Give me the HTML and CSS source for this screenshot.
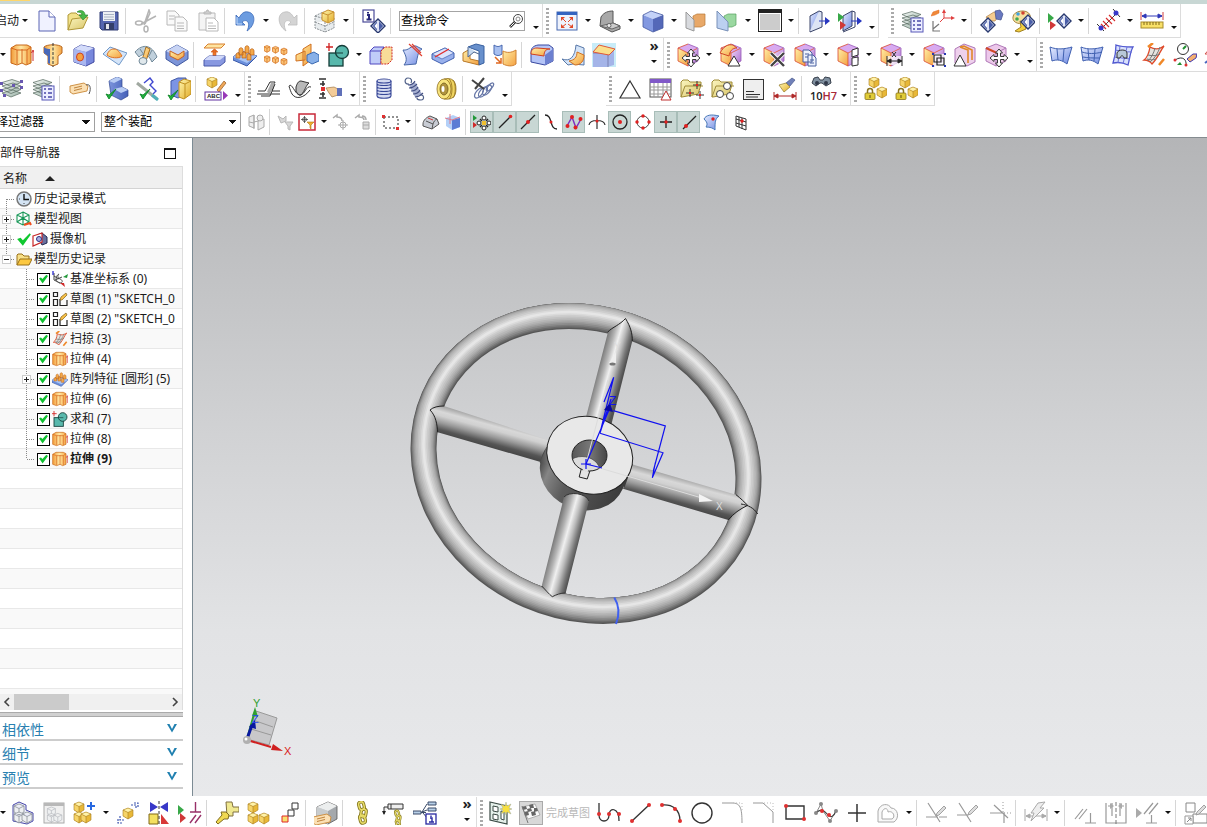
FILE: index.html
```html
<!DOCTYPE html>
<html lang="zh-CN">
<head>
<meta charset="utf-8">
<title>部件导航器</title>
<link rel="stylesheet" href="styles.css">
</head>
<body>
<svg class="defs" aria-hidden="true">
<defs>
<linearGradient id="gO" x1="0" y1="0" x2="1" y2="1"><stop offset="0" stop-color="#fff0a8"/><stop offset="1" stop-color="#f4a040"/></linearGradient>
<linearGradient id="gOh"><stop offset="0" stop-color="#f29a38"/><stop offset=".5" stop-color="#ffe8a4"/><stop offset="1" stop-color="#f4a444"/></linearGradient>
<linearGradient id="gB" x1="0" y1="0" x2="1" y2="1"><stop offset="0" stop-color="#e6ecff"/><stop offset="1" stop-color="#6f8ae2"/></linearGradient>
<linearGradient id="gD"><stop offset="0" stop-color="#7c94dc"/><stop offset="1" stop-color="#4460b8"/></linearGradient>
<linearGradient id="gY" x1="0" y1="0" x2="1" y2="1"><stop offset="0" stop-color="#fff6b0"/><stop offset="1" stop-color="#e2ac28"/></linearGradient>
<linearGradient id="gF" x1="0" y1="0" x2="1" y2="1"><stop offset="0" stop-color="#fbf6c0"/><stop offset="1" stop-color="#d8c468"/></linearGradient>
<linearGradient id="gP" x1="0" y1="0" x2="1" y2="1"><stop offset="0" stop-color="#efd9f8"/><stop offset="1" stop-color="#a868cc"/></linearGradient>
<linearGradient id="gG" x1="0" y1="0" x2="1" y2="1"><stop offset="0" stop-color="#f6f6f6"/><stop offset="1" stop-color="#8c8c8c"/></linearGradient>
<linearGradient id="gL" x1="0" y1="0" x2="1" y2="1"><stop offset="0" stop-color="#f2f6f4"/><stop offset="1" stop-color="#9cb4a8"/></linearGradient>
<g id="yc"><path d="M5 0l5 2v6l-5 3-5-3V2z" fill="#e8b838"/><path d="M5 0l5 2-5 2.500L0 2z" fill="#fff2a8"/><path d="M0 2l5 2.500V11L0 8z" fill="#f6d468"/><path d="M5 0l5 2v6l-5 3-5-3V2zM0 2l5 2.500L10 2M5 4.500V11" fill="none" stroke="#a87c20" stroke-width=".6"/></g>
<g id="oc"><path d="M3.500 0L7 1.500V6L3.500 8 0 6V1.500z" fill="#fbc478" stroke="#d06818" stroke-width=".8"/><path d="M0 1.500l3.500 1.700L7 1.500M3.500 3.200V8" fill="none" stroke="#d06818" stroke-width=".7"/></g>
<g id="gc"><path d="M5 0l5 2v6l-5 3-5-3V2zM0 2l5 2.500L10 2M5 4.500V11" fill="#eef0f2" stroke="#8a9098" stroke-width=".8"/></g>
<g id="pcube"><path d="M12 1l10 4-10 5L2 5z" fill="#d8aaf0"/><path d="M2 5l10 5v13L2 18z" fill="url(#gO)"/><path d="M22 5v13l-10 5V10z" fill="url(#gP)"/><path d="M12 1l10 4v13l-10 5" fill="none" stroke="#9858b8" stroke-width=".8"/><path d="M12 10v13L2 18V5l10 5 9-4.500M2 5l10-4" fill="none" stroke="#d84830" stroke-width=".8"/></g>
<g id="eye"><path d="M8 0l7 7-7 7-7-7z" fill="#dfe4f6" stroke="#28386e" stroke-width="1.400"/><path d="M7 2.500v9L2.800 7zM9 2.500v9L13.200 7z" fill="#4a5ea8"/><path d="M7 4v6L4.500 7z" fill="#fff"/></g>
<g id="lay"><path d="M2 16l9 4 10-4-8-3zM2 12.500l9 4 10-4-8-3zM2 9l9 4 10-4-8-3zM2 5.500l9 4 10-4-9-3z" fill="url(#gL)" stroke="#56685e" stroke-width=".7"/></g>
<g id="list"><rect x="11" y="9" width="12" height="14" fill="#eceeff" stroke="#5858b8"/><path d="M13 12h2M13 16h2M13 20h2M17 12h4M17 16h4M17 20h4" stroke="#4848a8" stroke-width="1.300"/></g>
<g id="tick"><path d="M1 6l3 5 7-10-7 6z" fill="#20b040" stroke="#088020" stroke-width=".8"/></g>
<g id="move"><path d="M7 0l3.500 4H8.500v3.500H12V5.500L16 9l-4 3.500v-2H8.500V14h2L7 18l-3.500-4h2v-3.500H2v2L-2 9l4-3.500v2h3.500V4h-2z" fill="#fff" stroke="#3a3a3a" stroke-width="1"/></g>
<g id="star"><path d="M6 0l1 4 4-2-2 4 3 1-3 1 2 4-4-2-1 3-1-3-4 2 2-4-3-1 3-1-2-4 4 2z" fill="#f8e040" stroke="#8898a0" stroke-width=".4"/></g>
<g id="tag"><path d="M1 6l14-3 4 3-1 5-14 3-3-2z" fill="#fbe0b4" stroke="#c88838" stroke-width=".9"/><path d="M5 8l8-2M5 10.500l8-2" stroke="#b87830" stroke-width=".9"/></g>
<g id="chain" fill="none" stroke="#857820" stroke-width="3.200"><rect x="2" y="1" width="5" height="8" rx="2.500" transform="rotate(-15 4 5)"/><rect x="4" y="8" width="5" height="8" rx="2.500" transform="rotate(10 6 12)"/><rect x="3" y="14" width="5" height="8" rx="2.500" transform="rotate(-15 6 18)"/><g stroke="#e8dc68" stroke-width="1.500"><rect x="2" y="1" width="5" height="8" rx="2.500" transform="rotate(-15 4 5)"/><rect x="4" y="8" width="5" height="8" rx="2.500" transform="rotate(10 6 12)"/><rect x="3" y="14" width="5" height="8" rx="2.500" transform="rotate(-15 6 18)"/></g></g>
<g id="pencil"><path d="M0 10l1-3L8 0l2 2-7 7z" fill="#ddd" stroke="#999" stroke-width=".9"/></g>
<g id="lock"><path d="M2.500 5V3a2.500 2.500 0 0 1 5 0v2" fill="none" stroke="#8a7420" stroke-width="1.500"/><rect x="0" y="5" width="10" height="6.500" rx="1" fill="#e0cc38" stroke="#8a7420" stroke-width=".8"/><path d="M5 7v3" stroke="#655010"/></g>
</defs>
<!-- standard bar -->
<symbol id="new" viewBox="0 0 24 24"><path d="M4 2h10l6 6v14H4z" fill="#f0f2ff" stroke="#5a64b4"/><path d="M14 2v6h6" fill="#fff" stroke="#5a64b4"/></symbol>
<symbol id="open" viewBox="0 0 24 24"><path d="M2 21V6l3-2h5l2 2h7v4" fill="#f2e28a" stroke="#b09838"/><path d="M2 21L6 10l16-2-5 11z" fill="url(#gF)" stroke="#b09838"/><path d="M11 3c4-3 8-1 8 3h3l-5 5-4-5h3c0-2-2-3-5-3z" fill="#48b848" stroke="#208028" stroke-width=".6"/></symbol>
<symbol id="save" viewBox="0 0 24 24"><path d="M3 3h18v18H5l-2-2z" fill="#5566b0" stroke="#303c74"/><rect x="6" y="3" width="12" height="9" fill="#edf0f4"/><path d="M7 5.500h10M7 8h10M7 10.500h10" stroke="#aab4c4"/><rect x="7" y="14" width="10" height="7" fill="#333e68"/><rect x="9" y="15" width="3" height="5" fill="#e4e6ec"/></symbol>
<symbol id="cut" viewBox="0 0 24 24" ><g fill="none" stroke="#b4b4b4" stroke-width="1.500"><path d="M7 15L22 7M10 16L15 1l1 3-5 11"/><ellipse cx="5" cy="14" rx="3.500" ry="2"/><ellipse cx="12" cy="20" rx="2" ry="3"/></g></symbol>
<symbol id="copy" viewBox="0 0 24 24"><g fill="#fafafa" stroke="#b8b8b8"><path d="M2 2h8l4 4v10H2z"/><path d="M10 8h8l4 4v10H10z"/><path d="M4 7h6M4 10h5M12 14h7M12 17h7M12 19.500h7"/></g></symbol>
<symbol id="paste" viewBox="0 0 24 24"><g fill="#f4f4f4" stroke="#b8b8b8"><path d="M3 4h16v17H3z"/><path d="M8 5V3h2l1-2h1l1 2h2v2z" fill="#ccc"/><path d="M10 9h8l4 4v9H10z" fill="#fff"/><path d="M12 14h5M12 17h8M12 19.500h8"/></g></symbol>
<symbol id="undo" viewBox="0 0 24 24"><path d="M3 6v10h9l-3-3c5-4 9 1 5 9 9-6 9-18 1-19-4-1-7 2-9 6z" fill="#6c9ce0" stroke="#3a68b8" stroke-width=".8"/><path d="M4 8v7h5" fill="none" stroke="#c4dcfc"/></symbol>
<symbol id="redo" viewBox="0 0 24 24"><path d="M21 6v10h-9l3-3c-5-4-9 1-5 9C1 16 1 4 9 3c4-1 7 2 9 6z" fill="#d4d4d4" stroke="#bcbcbc" stroke-width=".8"/></symbol>
<symbol id="box" viewBox="0 0 24 24"><path d="M2 7l8-4 11 6v10l-9 4-10-4zM2 13l10 4 9-4M12 10v13M2 7l10 3" fill="#e8ecee" stroke="#8a9094" stroke-dasharray="2 1"/><path d="M9 4l6-3 6 2v8l-6 3-6-3z" fill="url(#gY)" stroke="#c89030"/><path d="M9 4l6 2 6-3M15 6v8" fill="none" stroke="#c89030"/></symbol>
<symbol id="info" viewBox="0 0 24 24"><rect x="1" y="1" width="11" height="12" fill="#fff" stroke="#4a4a98" stroke-width="1.200"/><path d="M5 6h2v4M4.500 10.500h5M6 3v1.500" stroke="#28287a" stroke-width="2" fill="none"/><use href="#eye" x="8" y="10"/></symbol>
<symbol id="mag" viewBox="0 0 16 16"><circle cx="10" cy="6" r="4.500" fill="#fff" stroke="#444"/><circle cx="10" cy="6" r="2" fill="none" stroke="#888"/><path d="M7 9l-5 5" stroke="#333" stroke-width="2.600"/><path d="M6.500 9.500l-4 4" stroke="#fff"/></symbol>
<symbol id="fit" viewBox="0 0 24 24"><rect x="2" y="3" width="20" height="18" fill="#eef2fc" stroke="#4668b0"/><path d="M2 3h20v3H2z" fill="#3464c0"/><g fill="#e04828"><path d="M6 8h4l-4 4zM18 8h-4l4 4zM6 19h4l-4-4zM18 19h-4l4-4z"/><path d="M7 9l4 4M17 9l-4 4M7 18l4-3M17 18l-4-3" stroke="#e04828"/></g></symbol>
<symbol id="persp" viewBox="0 0 24 24"><path d="M2 17l1-9c3-5 8-6 12-6v12l7 3v3l-8 3z" fill="#a8a8a8" stroke="#555"/><path d="M2 17l13-3 7 3-8 3z" fill="#ccc" stroke="#666"/><circle cx="11" cy="16.500" r="2" fill="#eee" stroke="#666"/></symbol>
<symbol id="bcube" viewBox="0 0 24 24"><path d="M10 2l12 4-10 4L2 6z" fill="#c4d2f8"/><path d="M2 6l10 4v13L2 18z" fill="#8298e0"/><path d="M22 6v13l-10 4V10z" fill="#5468b8"/><path d="M10 2l12 4v13l-10 4-10-5V6z" fill="none" stroke="#4458a0" stroke-width=".8"/></symbol>
<symbol id="clip1" viewBox="0 0 24 24"><path d="M9 7l4-2h8v11l-4 2H9z" fill="#e8a868" stroke="#b87838" stroke-width=".7"/><path d="M2 3l8 8v11l-8-3z" fill="#d8dade" stroke="#999"/></symbol>
<symbol id="clip2" viewBox="0 0 24 24"><path d="M9 7l4-2h8v11l-4 2H9z" fill="#9ad8a0" stroke="#58a060" stroke-width=".7"/><path d="M2 2l11 11v9L2 19z" fill="#bcd0f0" stroke="#7890b8"/></symbol>
<symbol id="bg" viewBox="0 0 24 24"><rect x=".500" y=".500" width="23" height="22" fill="#ccc" stroke="#222"/><path d="M0 1h24v3H0z" fill="#222"/><rect x="1.500" y="4.500" width="21" height="17" fill="none" stroke="#fff"/></symbol>
<symbol id="door1" viewBox="0 0 24 24"><path d="M3 7l9-5v15l-9 5z" fill="url(#gB)" stroke="#3a4468"/><path d="M12 2l3 1v15l-12 5v-1" fill="#dde4f4" stroke="#3a4468"/><path d="M12 11.500h6V8l5 4-5 4v-3.500h-6z" fill="#2838c0"/></symbol>
<symbol id="door2" viewBox="0 0 24 24"><path d="M5 7l9-5v15l-9 5z" fill="url(#gB)" stroke="#3a4468"/><path d="M14 2l3 1v15L5 23" fill="none" stroke="#3a4468"/><path d="M13 11.500h6V8l5 4-5 4v-3.500h-6z" fill="#2838c0"/><path d="M0 4l6 4-6 5z" fill="#38a848"/><path d="M2 12l6 4-6 5z" fill="#d03838"/></symbol>
<symbol id="layset" viewBox="0 0 24 24"><use href="#lay"/><use href="#list"/></symbol>
<symbol id="laydots" viewBox="0 0 24 24"><use href="#lay"/><path d="M0 5h3v3H0zM20 3h3v3h-3zM0 12h3v3H0zM20 9h3v3h-3zM12 7h3v3h-3zM3 17h3v3H3z" fill="#6858b0"/></symbol>
<symbol id="wcs" viewBox="0 0 24 24"><path d="M13 3v6h8M13 9l-4 4" fill="none" stroke="#e04040"/><path d="M13 0l-2 4h4zM24 9l-4-2v4z" fill="#e04040"/><path d="M2 12v10h7M2 20l6-5" fill="none" stroke="#777" stroke-width="1.200"/><path d="M0 7l2-4 6-2v3L4 6z" fill="#f08838" stroke="#e06820" stroke-width=".5"/></symbol>
<symbol id="hand" viewBox="0 0 24 24"><path d="M6 8l8-5 5 3-4 6H9z" fill="#f4cc90" stroke="#b08040" stroke-width=".7"/><path d="M15 2l5-1 3 4-2 6-5-1z" fill="#6878c0" stroke="#40508c" stroke-width=".7"/><use href="#eye" x="0" y="9"/></symbol>
<symbol id="pal" viewBox="0 0 24 24"><path d="M2 8C2 2 16-1 19 6c2 6-5 4-6 7S1 15 2 8z" fill="#f4e0a0" stroke="#a88840"/><circle cx="7" cy="5" r="1.800" fill="#40a0e0"/><circle cx="12" cy="4" r="1.800" fill="#d04030"/><circle cx="6" cy="10" r="1.800" fill="#40a850"/><path d="M4 22l6-4-1-6 5 1 1 7-7 3z" fill="#f4d040" stroke="#a08020"/><use href="#eye" x="9" y="6"/></symbol>
<symbol id="show" viewBox="0 0 24 24"><path d="M0 4l6 5-6 5z" fill="#38a848"/><path d="M2 12l6 4-6 5z" fill="#d03838"/><use href="#eye" x="8" y="5"/></symbol>
<symbol id="meas" viewBox="0 0 24 24"><path d="M3 21L21 3" stroke="#444"/><path d="M6 12l6 6M9 9l6 6M12 6l6 6M4 15l5 5" stroke="#d83030" stroke-width="1.200"/><path d="M0 15l7 7M16 0l7 8" stroke="#333"/><circle cx="4" cy="19" r="2.500" fill="#3838c8"/><circle cx="19" cy="4" r="2.500" fill="#3838c8"/></symbol>
<symbol id="ruler" viewBox="0 0 24 24"><path d="M1 3v8M23 3v8" stroke="#d04040"/><path d="M2 7h20M2 7l4-2v4zM22 7l-4-2v4z" fill="#3038b8" stroke="#3038b8"/><rect x="1" y="13" width="22" height="6" fill="#f8e068" stroke="#a88c28"/><path d="M4 13v3M7 13v3M10 13v3M13 13v3M16 13v3M19 13v3" stroke="#806818"/></symbol>
<!-- feature bar -->
<symbol id="extr" viewBox="0 0 24 24"><path d="M1 5l5-3h11l4 2v16l-5 2-4-2-5 2-6-2z" fill="url(#gOh)" stroke="#c86818"/><path d="M1 5l6 2h10l4-3M7 7v14M12 6v14M17 7v14" fill="none" stroke="#d86820"/><path d="M23 8v10M21.500 10L23 7l1.500 3" stroke="#d03030" fill="none"/></symbol>
<symbol id="revol" viewBox="0 0 24 24"><path d="M3 4c3-3 15-3 18 0v6l-4 3v8l-5 2-5-2v-8l-4-3z" fill="url(#gOh)" stroke="#b86820"/><path d="M3 4c2 2 5 2 6 2v15l-2-1v-7l-4-3z" fill="#4868b8"/><path d="M12 0v24" stroke="#333" stroke-dasharray="3 1.500"/></symbol>
<symbol id="holeb" viewBox="0 0 24 24"><path d="M9 2l13 3v14l-8 4-12-4V6z" fill="#7888dc" stroke="#4048a0"/><path d="M2 6l12 3 8-4-13-3z" fill="#d4dcfa"/><path d="M14 9v14L2 19V6z" fill="#a8b6f0"/><ellipse cx="8" cy="14" rx="3.500" ry="4" fill="#f4a040" stroke="#d04020"/></symbol>
<symbol id="emb" viewBox="0 0 24 24"><path d="M0 11L7 4l17 6-8 12z" fill="#d4e4f8" stroke="#7098c8"/><path d="M4 12c1-3 3-6 7-6s6 4 8 7c-3 3-12 2-15-1z" fill="url(#gO)" stroke="#e07020"/></symbol>
<symbol id="swp" viewBox="0 0 24 24"><path d="M1 9C9 0 18 2 23 14l-5 5C14 10 9 10 5 14z" fill="#c0d0dc" stroke="#708898"/><path d="M12 4l4 2-4 12-4-1z" fill="url(#gO)" stroke="#a87020"/><ellipse cx="9" cy="18" rx="4" ry="3.500" fill="#e0e8ec" stroke="#708898"/><path d="M6 6l4 6M18 7l-3 6" stroke="#708898"/></symbol>
<symbol id="pock" viewBox="0 0 24 24"><path d="M12 2l11 6v8l-11 7L1 16V8z" fill="#7c94d8" stroke="#4058a0"/><path d="M12 2l11 6-11 6L1 8z" fill="#c8d4f4"/><path d="M5 8v5l8 4 6-4V8l-6 4z" fill="url(#gO)" stroke="#c86020"/></symbol>
<symbol id="thick" viewBox="0 0 24 24"><path d="M2 5l4-4h17l-4 4z" fill="#ffe4a0" stroke="#d88030"/><path d="M11 7h3v6h-3zM9 9l3.500-3L16 9z" fill="#f07828" stroke="#d05818" stroke-width=".6"/><path d="M2 17l5-4h16v6l-5 4H2z" fill="#8898e0" stroke="#4858a8"/><path d="M2 17l5-4h16l-5 4z" fill="#d0d8f8"/></symbol>
<symbol id="patt" viewBox="0 0 24 24"><path d="M0 14l8-6 16 5-10 10L0 17z" fill="#6c90dc" stroke="#3858a8"/><path d="M0 14l8-6 16 5-10 7z" fill="#a8c4f4"/><g fill="#f4a848" stroke="#b86018" stroke-width=".7"><path d="M6 7c0-3 4-3 4 0v5H6zM12 5c0-3 4-3 4 0v5h-4zM17 8c0-3 4-3 4 0v4h-4zM3 12c0-3 4-3 4 0v3H3zM9 11c0-3 4-3 4 0v4H9zM14 13c0-3 4-3 4 0v4h-4z"/></g></symbol>
<symbol id="pattg" viewBox="0 0 24 24"><g transform="scale(.85)"><use href="#oc" x="0" y="3"/><use href="#oc" x="10" y="4"/><use href="#oc" x="20" y="6"/><use href="#oc" x="0" y="15"/><use href="#oc" x="10" y="16"/><use href="#oc" x="20" y="18"/></g></symbol>
<symbol id="mirr" viewBox="0 0 24 24"><path d="M1 12l9-4v9l-9 1zM8 6l8-5v16l-8 6z" fill="url(#gO)" stroke="#d07020"/><path d="M12 12l7-3 5 3v6l-7 3-5-3z" fill="#88b0e8" stroke="#3868b0"/></symbol>
<symbol id="unite" viewBox="0 0 24 24"><rect x="3" y="10" width="14" height="13" fill="#58b8ac" stroke="#143c38" stroke-width="1.300"/><circle cx="16" cy="9" r="6.500" fill="#58b8ac" stroke="#143c38" stroke-width="1.300"/><path d="M17 10h-7" stroke="#143c38"/><path d="M3 0v8M-1 4h8" stroke="#d02020" stroke-width="1.300"/></symbol>
<symbol id="trim" viewBox="0 0 24 24"><path d="M1 8l4-4h10v14l-3 3H1z" fill="#c0ccf8" stroke="#5048c0"/><path d="M1 8h11v13M12 8l3-4" fill="none" stroke="#5048c0"/><path d="M12 8l4-4h7v13l-4 4h-7z" fill="#f8dc98" stroke="#d02828" stroke-dasharray="2 1"/></symbol>
<symbol id="trsh" viewBox="0 0 24 24"><path d="M3 7c6 1 8-5 13-4l6 3c-4 2-4 6-6 15l-12 1c4-5 2-9-1-15z" fill="url(#gB)" stroke="#4868a8"/><path d="M9 1l13 12M12 1l9 9" stroke="#e04030" stroke-width="1.200"/></symbol>
<symbol id="split" viewBox="0 0 24 24"><path d="M1 11l13-6 9 5v5l-12 6-10-5z" fill="#98b0ec" stroke="#4060b0"/><path d="M1 11l13-6 9 5-12 6z" fill="#dce4fc" stroke="#4060b0" stroke-width=".7"/><path d="M4 14l14-8" stroke="#e03030" stroke-width="1.400"/></symbol>
<symbol id="wrap" viewBox="0 0 24 24"><path d="M1 10l7-4v10l9 2v4L1 18z" fill="url(#gO)" stroke="#b87828"/><path d="M6 4l8-3 8 2v17l-5 2V8z" fill="#6890cc" stroke="#3860a0"/><path d="M6 4v10l6-5 5 2" fill="#c4d8f0" stroke="#506890"/></symbol>
<symbol id="repl" viewBox="0 0 24 24"><path d="M1 2c3 2 5 2 8 0v9c-3 2-5 2-8 0z" fill="#a8c0f0" stroke="#4868b0"/><path d="M10 8c4 2 8 2 13-1v14c-4 3-9 2-13 0z" fill="url(#gO)" stroke="#d08030"/><path d="M2 14l6 6M8 15v5H3" stroke="#e06820" fill="none" stroke-width="1.500"/></symbol>
<symbol id="blend" viewBox="0 0 24 24"><path d="M1 10c0-5 2-7 7-8h11l4 3v13l-8 4-14-3z" fill="#b4c4f6" stroke="#3848a0"/><path d="M15 12l8-6v12l-8 4z" fill="#6c80d0"/><path d="M1 11c0-4 2-6 6-6l13 1c-4 0-6 2-6 7z" fill="url(#gO)" stroke="#d04020"/></symbol>
<symbol id="fblend" viewBox="0 0 24 24"><path d="M1 16c8 3 13-2 14-14l8 3v17l-11-1-5 1z" fill="#d4e4f8" stroke="#5878a8"/><path d="M8 18c6-1 8-4 8-9l7 3c0 6-3 10-9 10z" fill="url(#gO)" stroke="#d07020"/></symbol>
<symbol id="chamf" viewBox="0 0 24 24"><path d="M0 0h24v24H0z" fill="#c8ecf8"/><path d="M1 10l6-7 15 4v15l-7 2H1z" fill="#a4b4e8"/><path d="M1 10h15v14" fill="none" stroke="#7880b0"/><path d="M1 9l6-7 16 4-6 6z" fill="#fbe08c" stroke="#e05838"/></symbol>
<symbol id="s-move" viewBox="0 0 24 24"><use href="#pcube"/><use href="#move" x="8" y="6"/></symbol>
<symbol id="s-pull" viewBox="0 0 24 24"><use href="#pcube"/><path d="M1 10c4-7 8-9 13-8l4 3c-5 0-7 3-8 8z" fill="url(#gO)" stroke="#d04828"/><path d="M15 13l6 10H9z" fill="#fff" stroke="#333"/></symbol>
<symbol id="s-del" viewBox="0 0 24 24"><use href="#pcube"/><path d="M9 10l13 13M22 10L9 23" stroke="#fff" stroke-width="4"/><path d="M9 10l13 13M22 10L9 23" stroke="#444" stroke-width="2.400"/></symbol>
<symbol id="s-copy" viewBox="0 0 24 24"><use href="#pcube"/><path d="M10 7h6l3 3v9h-9zM15 12h5l3 3v8h-8z" fill="#eef2fc" stroke="#4860a0"/><path d="M12 11h4M12 14h3M17 17h4M17 20h4" stroke="#4860a0"/></symbol>
<symbol id="s-patt" viewBox="0 0 24 24"><use href="#pcube"/><path d="M16 7l6-2v7l-6 2zM16 15l6-1v8l-6 1z" fill="#fff" stroke="#333"/></symbol>
<symbol id="s-dim" viewBox="0 0 24 24"><use href="#pcube"/><path d="M8 13h15v9H8z" fill="#fff" opacity=".7"/><path d="M8 13v10M23 13v10M9 18h13M8 18l4-2v4zM23 18l-4-2v4zM13 9l4 5M17 9l-4 5" fill="#222" stroke="#222"/></symbol>
<symbol id="s-grp" viewBox="0 0 24 24"><use href="#pcube"/><path d="M11 11h12v12H11z" fill="#fff" opacity=".8"/><path d="M12 12h7v7h-7zM15 15h7v7h-7z" fill="none" stroke="#222" stroke-width="1.200"/><path d="M10 10h2v2h-2zM22 10h2v2h-2zM10 22h2v2h-2zM22 22h2v2h-2z" fill="#2838b0"/></symbol>
<symbol id="s-off" viewBox="0 0 24 24"><path d="M2 6l9-5 11 4v14l-8 4-12-3z" fill="#eed0ec" stroke="#b078b8"/><path d="M7 4l8 3v13M7 4l4-1 8 4v10" fill="none" stroke="#e08828" stroke-width="1.600"/><path d="M7 12l6 11H1z" fill="#fff" stroke="#333"/></symbol>
<symbol id="s-edge" viewBox="0 0 24 24"><path d="M2 5l10-4 10 4v13l-10 5-10-5z" fill="#ecc8ea" stroke="#b078b8"/><path d="M12 10v13M12 10l10-5" stroke="#b078b8"/><path d="M2 5l11 5" stroke="#d04828" stroke-width="2"/><use href="#move" x="8" y="6"/></symbol>
<symbol id="f-rule" viewBox="0 0 24 24"><path d="M1 4c7 3 15 2 22 0l-5 17C13 17 8 16 3 18z" fill="url(#gB)" stroke="#4060b0"/><path d="M8 6l1 11M15 6l-1 12" stroke="#4060b0"/></symbol>
<symbol id="f-mesh" viewBox="0 0 24 24"><path d="M1 4c7 3 15 2 22 0l-5 17C13 17 8 16 3 18z" fill="url(#gB)" stroke="#4060b0"/><path d="M8 6l1 11M15 6l-1 12M2 9c6 2 13 2 20 0M3 14c5 1 10 1 17 1" fill="none" stroke="#4060b0"/></symbol>
<symbol id="f-n" viewBox="0 0 24 24"><path d="M5 2c5 2 11 2 17 2-3 5-3 11-5 18-4-2-10-3-15-2 2-6 3-12 3-18z" fill="#d8e0fc" stroke="#5058d0" stroke-width="1.300"/><path d="M3 14c6 1 10 1 16 2M4 7c6 1 11 2 17 2M9 3l-2 17M16 4l-4 17" fill="none" stroke="#6870d8"/><path d="M6 15V10c1-4 10-4 10 0v5h-3c-1-3-3-3-4 0z" fill="#b8c8d8" stroke="#333"/></symbol>
<symbol id="f-swept" viewBox="0 0 24 24"><path d="M8 4c5 3 10 2 14-1-4 5-6 12-12 18-2-3-6-4-8-4 4-3 5-7 6-13z" fill="#e4e4e0" stroke="#e04828" stroke-width="1.300"/><path d="M6 12c4 1 8 1 12-1M5 16c3 1 6 1 9 0M13 5c-1 5-4 10-7 13M18 4c-2 6-5 11-10 15" fill="none" stroke="#777"/><path d="M6 4l5-4M17 22l5-6" stroke="#f08828" stroke-width="2.500"/></symbol>
<symbol id="f-crv" viewBox="0 0 24 24"><circle cx="10" cy="6" r="5.500" fill="#fff" stroke="#333"/><path d="M2 17c8-5 12 0 11 6" fill="none" stroke="#333"/><path d="M10 6l3-3" stroke="#209030" stroke-width="2"/><circle cx="2" cy="17" r="1.500" fill="#e03030"/><circle cx="13" cy="22" r="1.500" fill="#e03030"/><path d="M7 19l-3 3h5z" fill="#209030"/><path d="M14 16l6-5h4l-1 4-6 4z" fill="#f4b070" stroke="#4038b0"/></symbol>
<symbol id="f-last" viewBox="0 0 24 24"><path d="M1 11L9 2l8 9z" fill="#fff" stroke="#d05048"/><path d="M1 20l8-6 12 2" fill="none" stroke="#4868c0" stroke-width="2"/></symbol>
<!-- utility bars -->
<symbol id="label" viewBox="0 0 24 24"><use href="#tag" x="1" y="3"/><path d="M18 8c5-2 5 5 3 9" fill="none" stroke="#555"/></symbol>
<symbol id="chk1" viewBox="0 0 24 24"><path d="M4 4l8-4 5 2v8l6 3v6l-7 4-10-5z" fill="url(#gD)" stroke="#304890" stroke-width=".7"/><path d="M4 4l5 2 8-4-5-2zM9 12l8-2 6 3-7 3z" fill="#b8ccf4"/><use href="#tick" x="0" y="11"/></symbol>
<symbol id="chk2" viewBox="0 0 24 24"><path d="M8 6l6-5 3 4-3 3 6 6-3 3" fill="none" stroke="#4048d0" stroke-width="1.400"/><path d="M1 6l20 16" stroke="#a0a8a0" stroke-width="3"/><path d="M16 18l6 5" stroke="#50b0b8" stroke-width="3"/><use href="#tick" x="3" y="11"/></symbol>
<symbol id="chk3" viewBox="0 0 24 24"><path d="M4 4l7-3h8v16l-8 4-7-3z" fill="#7c94e4" stroke="#4058a8"/><path d="M12 5l5-3 7 2v13l-7 5-5-2z" fill="url(#gY)" stroke="#c09020"/><path d="M12 5l6 2 6-3M18 7v14" fill="none" stroke="#c09020"/><use href="#tick" x="0" y="12"/></symbol>
<symbol id="abc" viewBox="0 0 24 24"><use href="#yc" x="3" y="0"/><path d="M13 13l7-9 2 2-7 9z" fill="#f0a858" stroke="#905820" stroke-width=".7"/><rect x="1" y="15" width="16" height="8" fill="#fff" stroke="#6030a0"/><path d="M19 14l5 4.500-5 4.500z" fill="#9838b8"/></symbol>
<symbol id="sh1" viewBox="0 0 24 24"><path d="M1 14h7l5-9h5l-3 9h8M0 17h23M4 19h9l5-12" fill="none" stroke="#333"/><path d="M10 15l4-9h4l-5 11z" fill="#aaa"/></symbol>
<symbol id="sh2" viewBox="0 0 24 24"><path d="M8 10c1-3 2-6 5-6l8 2c-3 2-4 8-8 12-2 1-4-2-5-4z" fill="#b8b8b8" stroke="#333"/><path d="M1 9c3-4 6 9 11 9s6-10 11-8M4 17c4 6 12 4 18-4M1 9c1 4 2 6 3 8" fill="none" stroke="#333"/></symbol>
<symbol id="ptr" viewBox="0 0 24 24"><path d="M0 2h7M0 21h7M4 4v5M4 15v5M1 7h5M1 17h5" stroke="#333" stroke-width="1.600"/><path d="M2 10h4v4H2z" fill="#e03030"/><path d="M7 11l8-1 4 2v6l-6 2-3-4z" fill="#f4cc98" stroke="#a07848" stroke-width=".7"/><path d="M18 11h5v8h-5z" fill="#6070b8"/></symbol>
<symbol id="spr1" viewBox="0 0 24 24"><path d="M5 3h14v18H5z" fill="#d4daf0"/><g fill="none" stroke="#384898" stroke-width="1.100"><ellipse cx="12" cy="4" rx="7" ry="2"/><path d="M5 7c1 2 13 2 14 0M5 10c1 2 13 2 14 0M5 13c1 2 13 2 14 0M5 16c1 2 13 2 14 0M5 19c1 3 13 3 14 0M5 4v15M19 4v15"/></g></symbol>
<symbol id="spr2" viewBox="0 0 24 24"><path d="M6 7C1 8 1 1 5 1s4 3 3 5M17 18c4-1 5 5 1 5s-4-2-4-2" fill="none" stroke="#506088" stroke-width="1.200"/><path d="M6 8l6-3 7 12-7 3z" fill="#a4aed0"/><path d="M5 8c3 0 6-2 7-4M6 11c3 0 6-2 8-4M8 14c3 0 6-2 7-4M10 17c3 0 6-2 7-4M12 20c3 0 6-2 8-4" stroke="#404c80" fill="none" stroke-width="1.100"/></symbol>
<symbol id="disc" viewBox="0 0 24 24"><path d="M10 2c8-2 12 2 12 10s-4 11-12 10z" fill="#f0d460" stroke="#907020" stroke-width=".8"/><path d="M15 2c4 3 4 17 0 20M19 3c3 3 3 15 0 18" fill="none" stroke="#907020" stroke-width=".8"/><ellipse cx="10" cy="12" rx="7" ry="10" fill="#f8e47c" stroke="#907020" stroke-width=".8"/><ellipse cx="10" cy="12" rx="4" ry="6" fill="#b09440" stroke="#705818" stroke-width=".8"/><ellipse cx="9" cy="12" rx="1.500" ry="3" fill="#fff"/></symbol>
<symbol id="coil" viewBox="0 0 24 24"><g fill="none" stroke="#6878a8" stroke-width="1.300"><ellipse cx="8" cy="16" rx="3" ry="6" transform="rotate(40 8 16)"/><ellipse cx="12" cy="15" rx="3" ry="6" transform="rotate(40 12 15)"/><ellipse cx="16" cy="13" rx="3" ry="6" transform="rotate(40 16 13)"/><ellipse cx="19" cy="10" rx="2" ry="5" transform="rotate(40 19 10)"/></g><path d="M1 3l12 9M13 1L4 12" stroke="#444" stroke-width="2"/></symbol>
<symbol id="tri" viewBox="0 0 24 24"><path d="M12 4l10 17H2z" fill="#fff" stroke="#333" stroke-width="1.200"/></symbol>
<symbol id="tbl" viewBox="0 0 24 24"><rect x="1" y="2" width="21" height="18" fill="#fff" stroke="#555"/><path d="M1 2h21v4H1z" fill="#8058c8"/><path d="M1 10h21M1 13h21M1 17h21M5 6v14M9 6v14M14 6v14M18 6v14" stroke="#999"/><path d="M17 14l5 9H12z" fill="#fff" stroke="#c03030"/></symbol>
<symbol id="fplus" viewBox="0 0 24 24"><path d="M1 20V5l2-2h5l2 2h11v3l-3 9-16 3z" fill="url(#gF)" stroke="#a08c38"/><path d="M1 20L5 9h18" fill="none" stroke="#a08c38"/><path d="M17 4v8M13 8h8M10 12v8M6 16h8M20 14v8M16 18h8" stroke="#333"/><path d="M16 7h2v2h-2zM9 15h2v2H9zM19 17h2v2h-2z" fill="#f02020"/></symbol>
<symbol id="fcirc" viewBox="0 0 24 24"><path d="M1 20V5l2-2h5l2 2h11v3l-3 9-16 3z" fill="url(#gF)" stroke="#a08c38"/><path d="M1 20L5 9h18" fill="none" stroke="#a08c38"/><g fill="#fff" stroke="#444"><circle cx="16" cy="9" r="3.500"/><circle cx="9" cy="17" r="3.500"/><circle cx="19" cy="19" r="3.500"/></g></symbol>
<symbol id="note" viewBox="0 0 24 24"><rect x="1.500" y="2.500" width="20" height="20" fill="#eee" stroke="#333"/><path d="M4 14.500h8M4 17.500h14M4 20h12" stroke="#333"/></symbol>
<symbol id="brush" viewBox="0 0 24 24"><path d="M13 6l6-5 3 2-5 6z" fill="#7080b8" stroke="#48588c" stroke-width=".7"/><path d="M6 8l7-2 4 4-6 5z" fill="url(#gY)" stroke="#907828" stroke-width=".7"/><path d="M1 15v8M23 15v8M2 19h20M1 19l4-2v4zM23 19l-4-2v4z" fill="#b02828" stroke="#b02828"/></symbol>
<symbol id="lockc" viewBox="0 0 24 24"><use href="#yc" x="6" y="0"/><use href="#yc" x="14" y="10"/><use href="#lock" x="2" y="11"/></symbol>
<!-- selection bar -->
<symbol id="q1" viewBox="0 0 18 18"><path d="M1 4l5-2v13l-5-2zM6 2v14M10 8l6-2v8l-6 3zM1 9l5 1M6 9l4-1" fill="#eee" stroke="#aaa"/><circle cx="12" cy="5" r="3" fill="#eee" stroke="#aaa"/></symbol>
<symbol id="q2" viewBox="0 0 18 18"><path d="M2 3l5 3 3-3v5l-5 2zM9 9h8l-3 4v4l-2-1v-3z" fill="#d8d8d8" stroke="#b8b8b8"/></symbol>
<symbol id="q3" viewBox="0 0 18 18"><rect x="1" y="1" width="16" height="16" fill="#fff" stroke="#c82838" stroke-width="1.500"/><circle cx="6.500" cy="6.500" r="2" fill="none" stroke="#444" stroke-width=".8"/><path d="M6.500 3v7M3 6.500h7" stroke="#444" stroke-width=".8"/><path d="M9 9h7l-3 3v4l-1-1v-3z" fill="#f0b030" stroke="#b07818" stroke-width=".6"/></symbol>
<symbol id="q4" viewBox="0 0 18 18"><path d="M1 5l4-3v2c4 0 5 2 5 4" fill="none" stroke="#aaa" stroke-width="1.500"/><circle cx="11" cy="12" r="3" fill="none" stroke="#aaa"/><path d="M11 7v10M6 12h10" stroke="#aaa"/></symbol>
<symbol id="q5" viewBox="0 0 18 18"><path d="M1 5l4-3v2c4 0 5 2 5 3M8 3c3 0 4 2 4 4" fill="none" stroke="#aaa" stroke-width="1.500"/><path d="M9 9h6v7H9zM9 12h6" fill="#ddd" stroke="#aaa"/></symbol>
<symbol id="q6" viewBox="0 0 18 18"><path d="M2 4h14v11H2z" fill="none" stroke="#222" stroke-dasharray="2 2"/><path d="M0 2h3v3H0zM14 14h3v3h-3z" fill="#e03030"/></symbol>
<symbol id="q7" viewBox="0 0 18 18"><path d="M1 11c0-4 4-7 7-8l7 3 2 5-7 5-9-3z" fill="#c8ccd4" stroke="#555"/><path d="M4 8l7 3c1-3 2-4 4-5M11 11l-1 5" fill="none" stroke="#555"/><path d="M6 5l5 2" stroke="#d03838"/></symbol>
<symbol id="q8" viewBox="0 0 18 18"><path d="M2 5l7-3 7 3v9l-8 3-6-4z" fill="#b4d0f8"/><path d="M8 7l8-2v9l-8 3z" fill="#5c7cd4"/><path d="M6 1v10M1 5l7 2 8-3" stroke="#e07888" fill="none"/></symbol>
<symbol id="q9" viewBox="0 0 18 18"><path d="M0 2l4 3-4 3z" fill="#209838"/><path d="M0 9l4 3-4 3z" fill="#d02828"/><g fill="#fff" stroke="#222"><circle cx="11" cy="5" r="2"/><circle cx="11" cy="15" r="2"/><circle cx="6" cy="10" r="2"/><circle cx="16" cy="10" r="2"/></g><path d="M9 8h4v4H9z" fill="#f0c030"/><path d="M7 6l2 2M15 6l-2 2M7 14l2-2M15 14l-2-2" stroke="#222" stroke-width="1.500"/></symbol>
<symbol id="q10" viewBox="0 0 18 18"><path d="M3 15L14 4" stroke="#222" stroke-width="1.300"/><circle cx="14.500" cy="3.500" r="1.800" fill="#e02020"/></symbol>
<symbol id="q11" viewBox="0 0 18 18"><path d="M2 16L16 2" stroke="#222" stroke-width="1.300"/><circle cx="9" cy="9" r="2" fill="#e02020"/></symbol>
<symbol id="q12" viewBox="0 0 18 18"><path d="M3 2c8 0 4 14 12 14" fill="none" stroke="#222" stroke-width="1.300"/><circle cx="9" cy="9" r="1.500" fill="#e02020"/></symbol>
<symbol id="q13" viewBox="0 0 18 18"><path d="M2 13L7 4l4 11 5-9" fill="none" stroke="#8030c0" stroke-width="1.500"/><g fill="#e02020"><circle cx="2.500" cy="13" r="2"/><circle cx="7" cy="4" r="2"/><circle cx="10.500" cy="14.500" r="2"/><circle cx="15.500" cy="6" r="2"/></g></symbol>
<symbol id="q14" viewBox="0 0 18 18"><path d="M9 2v14M1 12c1-6 15-6 16 0" fill="none" stroke="#333" stroke-width="1.200"/><circle cx="9" cy="8" r="1.500" fill="#e02020"/></symbol>
<symbol id="q15" viewBox="0 0 18 18"><circle cx="9" cy="9" r="7" fill="none" stroke="#222" stroke-width="1.300"/><circle cx="9" cy="9" r="2" fill="#e02020"/></symbol>
<symbol id="q16" viewBox="0 0 18 18"><circle cx="9" cy="9" r="6" fill="none" stroke="#444"/><g fill="#e02020"><circle cx="9" cy="3" r="1.700"/><circle cx="9" cy="15" r="1.700"/><circle cx="3" cy="9" r="1.700"/><circle cx="15" cy="9" r="1.700"/></g></symbol>
<symbol id="q17" viewBox="0 0 18 18"><path d="M9 3v12M3 9h12" stroke="#222" stroke-width="1.300"/><circle cx="9" cy="9" r="1.700" fill="#e02020"/></symbol>
<symbol id="q18" viewBox="0 0 18 18"><path d="M3 16L16 3" stroke="#222" stroke-width="1.300"/><circle cx="6" cy="13" r="2" fill="#e02020"/></symbol>
<symbol id="q19" viewBox="0 0 18 18"><path d="M1 6c2-4 7-5 15-3-4 3-4 6-4 14-2-2-5-3-9-3 2-3 1-5-2-8z" fill="url(#gB)" stroke="#4878b8"/><circle cx="10" cy="6" r="1.700" fill="#e02020"/></symbol>
<symbol id="q20" viewBox="0 0 18 18"><path d="M4 3l10 3v11L4 13zM7 4v10M10 5v11M4 6l10 3M4 10l10 3" fill="#fff" stroke="#333"/><circle cx="10" cy="8" r="1.700" fill="#e02020"/></symbol>
<!-- assembly and sketch bars -->
<symbol id="a1" viewBox="0 0 24 24"><path d="M2 4l6-3 7 3v5l7 3v8l-6 3-14-3z" fill="#ecedfa" stroke="#4848a8"/><use href="#gc" x="3" y="3"/><use href="#gc" x="3" y="11"/><use href="#gc" x="11" y="11"/></symbol>
<symbol id="a2" viewBox="0 0 24 24"><rect x="2" y="2" width="20" height="20" fill="#f0f0f0" stroke="#aaa"/><path d="M2 2h20v3H2z" fill="#b8b8b8"/><g opacity=".6" transform="translate(3 2) scale(.8)"><use href="#gc" x="3" y="5"/><use href="#gc" x="3" y="13"/><use href="#gc" x="11" y="13"/></g></symbol>
<symbol id="a3" viewBox="0 0 24 24"><use href="#yc" x="1" y="1"/><use href="#yc" x="1" y="11"/><use href="#yc" x="8" y="11"/><path d="M18 1v8M14 5h8" stroke="#2868e0" stroke-width="2"/></symbol>
<symbol id="a4" viewBox="0 0 24 24"><use href="#yc" x="7" y="7"/><path d="M18 2h4v4M15 4h5v4M2 18v4h4M4 15v4h5" fill="none" stroke="#4058b0" stroke-width="1.200" stroke-dasharray="2 1"/></symbol>
<symbol id="a5" viewBox="0 0 24 24"><path d="M12 0v24" stroke="#333" stroke-dasharray="3 2"/><path d="M3 1l8 5-8 5zM21 1l-8 5 8 5z" fill="#3838c8"/><path d="M2 13h9v10H2z" fill="#f4e060" stroke="#806818"/><path d="M14 13l8 10h-8z" fill="#d83838"/></symbol>
<symbol id="a6" viewBox="0 0 24 24"><path d="M0 4l6 5-6 5z" fill="#38a848"/><path d="M2 12l6 5-6 5z" fill="#d03838"/><path d="M12 11h11M17.500 1v10M12 22l6-8M17 22l6-8" stroke="#983068" stroke-width="1.400"/></symbol>
<symbol id="a7" viewBox="0 0 24 24"><path d="M11 1h6l1 5h6v5h-6v4h-6z" fill="#f0e890" stroke="#807040"/><path d="M1 21l6-7-1-3h5l3 3-1 4H9l-6 5z" fill="#f0d850" stroke="#806c20"/></symbol>
<symbol id="a8" viewBox="0 0 24 24"><use href="#yc" x="2" y="1"/><use href="#yc" x="2" y="12"/><use href="#yc" x="13" y="12"/></symbol>
<symbol id="a9" viewBox="0 0 24 24"><path d="M15 2h6v6h-6zM11 9h6v6h-6z" fill="#fff" stroke="#333"/><path d="M5 15h6v6H5z" fill="#f8e070" stroke="#e02828"/></symbol>
<symbol id="a10" viewBox="0 0 24 24"><path d="M3 6l11-5 9 4v13l-9 5-11-4z" fill="#a4a8ac" stroke="#555" stroke-width=".8"/><path d="M3 6l11 4v13L3 19z" fill="#c8ccce"/><path d="M3 6l11 4 9-5-9-4z" fill="#eceeee"/><use href="#tag" x="-2" y="10"/></symbol>
<symbol id="a11" viewBox="0 0 24 24"><use href="#chain" x="6" y="0"/></symbol>
<symbol id="a12" viewBox="0 0 24 24"><path d="M6 3h15v5H6zM6 6H2v7M9 3v5" fill="#eee" stroke="#333"/><path d="M0 10l2 4 2-4z" fill="#222"/><g transform="translate(12 9) scale(.7)"><use href="#chain"/></g></symbol>
<symbol id="a13" viewBox="0 0 24 24"><path d="M8 11.500h5M9 11l5-8M9 11l5-2M10 12l5 6" stroke="#3a4a68"/><path d="M0 10h8v3H0zM15 1h8v3h-8zM15 7h8v3h-8z" fill="#b8d0e8" stroke="#3a4a68"/><rect x="13" y="13" width="10" height="10" fill="#fff" stroke="#2828a0" stroke-width="1.300"/><path d="M17 17h2v4M16 21h5M18 14.500v1.500" stroke="#2828a0" stroke-width="1.400" fill="none"/></symbol>
<symbol id="k1" viewBox="0 0 24 24"><path d="M1 1l17 4v18L1 19z" fill="#e4f0ea" stroke="#3a4a44" stroke-width="1.200"/><path d="M4 5l5 1v5l-5-1zM12 10l3 1v8l-3-1zM4 13l5 1v5l-5-1z" fill="#fff" stroke="#3a4a44"/><use href="#star" x="11" y="1"/></symbol>
<symbol id="k2" viewBox="0 0 24 24"><rect x=".500" y=".500" width="23" height="23" fill="#d8d8d8" stroke="#aaa"/><path d="M3 6l13-3 5 11-12 4z" fill="#fafafa" stroke="#888" stroke-width=".6"/><path d="M3 6l4-1 1 3-4 1zM10 4l4-1 1 4-4 0zM8 8l4-1 1 3-4 1zM15 7l3 0 1 3-4 1zM5 11l4-1 1 4-4 1zM12 11l4-1 1 4-4 1z" fill="#666"/><path d="M3 5l6 17" stroke="#777"/></symbol>
<symbol id="k3" viewBox="0 0 24 24"><path d="M2 2v12c0 8 10 8 10 0s10-8 10 6" fill="none" stroke="#333" stroke-width="1.300"/><g fill="#e03030"><circle cx="2" cy="13" r="2"/><circle cx="12" cy="13" r="2"/><circle cx="22" cy="13" r="2"/></g></symbol>
<symbol id="k4" viewBox="0 0 24 24"><path d="M4 20L21 4" stroke="#333" stroke-width="1.300"/><g fill="#e03030"><circle cx="4" cy="20" r="2"/><circle cx="21" cy="4" r="2"/></g></symbol>
<symbol id="k5" viewBox="0 0 24 24"><path d="M3 4c10-1 18 4 18 16" fill="none" stroke="#333" stroke-width="1.300"/><g fill="#e03030"><circle cx="3" cy="4" r="2"/><circle cx="16" cy="8" r="2"/><circle cx="21" cy="20" r="2"/></g></symbol>
<symbol id="k6" viewBox="0 0 24 24"><circle cx="12" cy="12" r="10" fill="none" stroke="#333" stroke-width="1.400"/></symbol>
<symbol id="k7" viewBox="0 0 24 24"><path d="M1 2h10c8 0 10 4 10 20" fill="none" stroke="#999"/><path d="M12 2h9v9" fill="none" stroke="#bbb" stroke-dasharray="1 2"/></symbol>
<symbol id="k8" viewBox="0 0 24 24"><path d="M1 2h10l10 9v11" fill="none" stroke="#999"/><path d="M12 2h9v9" fill="none" stroke="#bbb" stroke-dasharray="1 2"/></symbol>
<symbol id="k9" viewBox="0 0 24 24"><path d="M3 5h18v13H3z" fill="#fff" stroke="#333" stroke-width="1.400"/><circle cx="3" cy="5" r="2" fill="#e03030"/><circle cx="21" cy="18" r="2" fill="#e03030"/></symbol>
<symbol id="k10" viewBox="0 0 24 24"><path d="M2 12L7 3l2 7 7 10 6-10" fill="none" stroke="#888"/><path d="M2 12c4-4 7-4 11 1s7 2 9-3" fill="none" stroke="#444" stroke-width="1.200"/><g fill="#888"><circle cx="2" cy="12" r="2"/><circle cx="7" cy="3" r="2"/><circle cx="16" cy="20" r="2"/><circle cx="22" cy="10" r="2"/></g><circle cx="8" cy="10" r="2" fill="#e03030"/><circle cx="15" cy="14" r="2" fill="#e03030"/></symbol>
<symbol id="k11" viewBox="0 0 24 24"><path d="M12 3v18M3 12h18" stroke="#333" stroke-width="1.500"/></symbol>
<symbol id="k12" viewBox="0 0 24 24"><path d="M2 21V10c2-8 11-8 13-3 7 0 9 10 3 14z" fill="#f8f8f8" stroke="#aaa"/><path d="M6 18v-7c2-5 6-4 6 0 5-2 8 5 4 7z" fill="#fff" stroke="#aaa"/></symbol>
<symbol id="k13" viewBox="0 0 24 24"><path d="M3 2l12 19M1 16h12M14 16h8" stroke="#999" stroke-width="1.200"/><use href="#pencil" x="11" y="5"/></symbol>
<symbol id="k14" viewBox="0 0 24 24"><path d="M3 2l12 19M1 14h11" stroke="#999" stroke-width="1.200"/><use href="#pencil" x="12" y="4"/></symbol>
<symbol id="k15" viewBox="0 0 24 24"><path d="M3 12h14V22M7 4l14 13" fill="none" stroke="#999" stroke-width="1.200"/><path d="M16 1v11h8" fill="none" stroke="#999" stroke-dasharray="1 2"/></symbol>
<symbol id="k16" viewBox="0 0 24 24"><path d="M1 8v12M23 8v12M2 15h20M2 15l4-2v4zM22 15l-4-2v4z" fill="#aaa" stroke="#aaa"/><path d="M14 2l7-1-5 6h4L7 20l3-8H7z" fill="#eee" stroke="#aaa"/></symbol>
<symbol id="k17" viewBox="0 0 24 24"><path d="M2 18L10 8M6 18l8-10M12 22h11M17.500 12v10" stroke="#999" stroke-width="1.200"/></symbol>
<symbol id="k18" viewBox="0 0 24 24"><path d="M2 2v20h20V2M8 2v13M16 2v13M4 5h4M20 5h-4" fill="none" stroke="#999" stroke-width="1.200"/><path d="M12 1v22" stroke="#777" stroke-dasharray="4 2"/><path d="M6 2l4 3-4 3zM18 2l-4 3 4 3z" fill="#aaa"/></symbol>
<symbol id="k19" viewBox="0 0 24 24"><path d="M1 7l6 5-6 5z" fill="#aaa"/><path d="M9 13L18 2M14 13l9-11M11 22h11M16.500 14v8" stroke="#999" stroke-width="1.200"/></symbol>
<symbol id="k20" viewBox="0 0 24 24"><path d="M2 2h9v9H2zM9 13h14v9H9z" fill="#fff" stroke="#888"/><path d="M1 15h8v8H1z" fill="#fff" stroke="#999"/><path d="M3 21l4-4M4 17h3v3" stroke="#888" fill="none"/><use href="#pencil" x="12" y="4"/></symbol>
<!-- navigator -->
<symbol id="t-clock" viewBox="0 0 16 16"><circle cx="8" cy="8" r="7" fill="#d4e4f4" stroke="#777" stroke-width="1.500"/><path d="M8 3v5.500h5" fill="none" stroke="#111" stroke-width="1.400"/><path d="M3 8h1M8 12v1" stroke="#444"/></symbol>
<symbol id="t-view" viewBox="0 0 16 16"><path d="M7 1l6 3v7l-6 3-6-3V4zM1 4l6 3 6-3M7 1v13M1 11l6-4 6 4" fill="#fff" stroke="#189858" stroke-width="1.100"/><path d="M8 14l6-2 1 2" stroke="#f05020" stroke-width="2" fill="none"/></symbol>
<symbol id="t-cam" viewBox="0 0 16 16"><path d="M5 4l5-2 5 4v6l-5 2z" fill="#6870a0" stroke="#222850"/><path d="M1 5l9-3v9l-9 4z" fill="#fff" stroke="#c82828" stroke-width="1.200"/><circle cx="7" cy="8" r="2.500" fill="#a8b0e0" stroke="#303080"/></symbol>
<symbol id="t-fold" viewBox="0 0 16 16"><path d="M1 14V4l1-1h4l2 2h5v3" fill="#f8e088" stroke="#987018"/><path d="M1 14l3-6h12l-3 6z" fill="#fcc840" stroke="#987018"/></symbol>
<symbol id="t-csys" viewBox="0 0 16 16"><path d="M2 2v7l6 3M2 5l5 3M3 9l7-3" fill="none" stroke="#444"/><path d="M7 3c-4 2-4 8 1 9 3 0 3-3 0-4-2-1-3-3-1-5z" fill="none" stroke="#555"/><path d="M1 0v4" stroke="#2828d0" stroke-width="1.300"/><path d="M11 6l5-3-1 4z" fill="#209838"/><path d="M8 12l5 4-1-4z" fill="#d02828"/></symbol>
<symbol id="t-sk" viewBox="0 0 16 16"><path d="M1.500 1.500h4v4h-4zM1.500 8.500h4v6h-4zM8 8v6.500h7V9" fill="none" stroke="#222" stroke-width="1.200"/><path d="M8 9l1-3 5-4 1 2-5 5z" fill="#f8c048" stroke="#806018" stroke-width=".7"/></symbol>
<symbol id="t-tick" viewBox="0 0 14 14"><path d="M1 7l3-1 2 2 6-6 1 1-7 10z" fill="#10c830"/></symbol>
<symbol id="g-top" viewBox="0 0 16 20"><path d="M6.500 10v10M7 10.500h8" fill="none" stroke="#888" stroke-dasharray="1 1"/></symbol>
<symbol id="g-mid" viewBox="0 0 16 20"><path d="M6.500 0v20M7 10.500h8" fill="none" stroke="#888" stroke-dasharray="1 1"/></symbol>
<symbol id="g-end" viewBox="0 0 16 20"><path d="M6.500 0v10M7 10.500h8" fill="none" stroke="#888" stroke-dasharray="1 1"/></symbol>
<symbol id="g-plus" viewBox="0 0 16 20"><path d="M6.500 0v20M7 10.500h8" fill="none" stroke="#888" stroke-dasharray="1 1"/><rect x="2.500" y="6.500" width="8" height="8" fill="#fff" stroke="#ccc"/><path d="M4 10.500h5M6.500 8v5" stroke="#222"/></symbol>
<symbol id="g-minus" viewBox="0 0 16 20"><path d="M6.500 0v8M7 10.500h8" fill="none" stroke="#888" stroke-dasharray="1 1"/><rect x="2.500" y="6.500" width="8" height="8" fill="#fff" stroke="#ccc"/><path d="M4 10.500h5" stroke="#222"/></symbol>
</svg>

<header class="bars">
<div class="caption"><span class="caption-tab"></span></div>

<div class="row">
<div class="bar">
<button class="start">启动</button><button class="dd" aria-label="启动选项"></button>
<button class="tb" aria-label="新建"><svg><use href="#new"/></svg></button>
<button class="tb" aria-label="打开"><svg><use href="#open"/></svg></button>
<button class="tb" aria-label="保存"><svg><use href="#save"/></svg></button><i class="sep"></i>
<button class="tb" aria-label="剪切"><svg><use href="#cut"/></svg></button>
<button class="tb" aria-label="复制"><svg><use href="#copy"/></svg></button>
<button class="tb" aria-label="粘贴"><svg><use href="#paste"/></svg></button><i class="sep"></i>
<button class="tb" aria-label="撤消"><svg><use href="#undo"/></svg></button><button class="dd" aria-label="撤消列表"></button>
<button class="tb" aria-label="重做"><svg><use href="#redo"/></svg></button><i class="sep"></i>
<button class="tb" aria-label="移动组件"><svg><use href="#box"/></svg></button><button class="dd" aria-label="更多"></button><i class="sep"></i>
<button class="tb" aria-label="对象信息"><svg><use href="#info"/></svg></button><i class="sep"></i>
<div class="search"><input type="text" aria-label="查找命令" value="查找命令"><svg><use href="#mag"/></svg></div>
<button class="opt" aria-label="工具条选项"></button>
</div>
<div class="bar"><i class="grip"></i>
<button class="tb" aria-label="适合窗口"><svg><use href="#fit"/></svg></button><button class="dd" aria-label="更多"></button>
<button class="tb" aria-label="透视"><svg><use href="#persp"/></svg></button><button class="dd" aria-label="更多"></button>
<button class="tb" aria-label="着色"><svg><use href="#bcube"/></svg></button><button class="dd" aria-label="更多"></button>
<button class="tb" aria-label="编辑截面"><svg><use href="#clip1"/></svg></button>
<button class="tb" aria-label="剪切截面"><svg><use href="#clip2"/></svg></button><button class="dd" aria-label="更多"></button>
<button class="tb" aria-label="背景"><svg><use href="#bg"/></svg></button><button class="dd" aria-label="更多"></button><i class="sep"></i>
<button class="tb" aria-label="退出"><svg><use href="#door1"/></svg></button>
<button class="tb" aria-label="切换"><svg><use href="#door2"/></svg></button>
<button class="opt" aria-label="工具条选项"></button>
</div>
<div class="bar spaced"><i class="grip"></i>
<button class="tb" aria-label="图层设置"><svg><use href="#layset"/></svg></button>
<button class="tb" aria-label="坐标系"><svg><use href="#wcs"/></svg></button><button class="dd" aria-label="更多"></button><i class="sep"></i>
<button class="tb" aria-label="隐藏"><svg><use href="#hand"/></svg></button>
<button class="tb" aria-label="编辑对象显示"><svg><use href="#pal"/></svg></button><i class="sep"></i>
<button class="tb" aria-label="显示和隐藏"><svg><use href="#show"/></svg></button><button class="dd" aria-label="更多"></button><i class="sep"></i>
<button class="tb" aria-label="测量距离"><svg><use href="#meas"/></svg></button><button class="dd" aria-label="更多"></button>
<button class="tb" aria-label="测量"><svg><use href="#ruler"/></svg></button>
<button class="opt" aria-label="工具条选项"></button>
</div>
</div>

<div class="row">
<div class="bar"><button class="dd cut" aria-label="更多"></button>
<button class="tb" aria-label="拉伸"><svg><use href="#extr"/></svg></button>
<button class="tb" aria-label="回转"><svg><use href="#revol"/></svg></button>
<button class="tb" aria-label="孔"><svg><use href="#holeb"/></svg></button>
<button class="tb" aria-label="凸起"><svg><use href="#emb"/></svg></button>
<button class="tb" aria-label="管道"><svg><use href="#swp"/></svg></button>
<button class="tb" aria-label="腔体"><svg><use href="#pock"/></svg></button><i class="sep"></i>
<button class="tb" aria-label="加厚"><svg><use href="#thick"/></svg></button>
<button class="tb" aria-label="阵列特征"><svg><use href="#patt"/></svg></button>
<button class="tb" aria-label="阵列几何"><svg><use href="#pattg"/></svg></button>
<button class="tb" aria-label="镜像特征"><svg><use href="#mirr"/></svg></button>
<button class="tb" aria-label="求和"><svg><use href="#unite"/></svg></button><button class="dd" aria-label="更多"></button>
<button class="tb" aria-label="修剪体"><svg><use href="#trim"/></svg></button>
<button class="tb" aria-label="修剪片体"><svg><use href="#trsh"/></svg></button>
<button class="tb" aria-label="拆分体"><svg><use href="#split"/></svg></button>
<button class="tb" aria-label="抽壳"><svg><use href="#wrap"/></svg></button>
<button class="tb" aria-label="偏置面"><svg><use href="#repl"/></svg></button><i class="sep"></i>
<button class="tb" aria-label="边倒圆"><svg><use href="#blend"/></svg></button>
<button class="tb" aria-label="面倒圆"><svg><use href="#fblend"/></svg></button>
<button class="tb" aria-label="倒斜角"><svg><use href="#chamf"/></svg></button>
<button class="opt more wide" aria-label="更多命令"></button>
</div>
<div class="bar"><i class="grip"></i>
<button class="tb" aria-label="移动面"><svg><use href="#s-move"/></svg></button><button class="dd" aria-label="更多"></button>
<button class="tb" aria-label="调整圆角"><svg><use href="#s-pull"/></svg></button><button class="dd" aria-label="更多"></button>
<button class="tb" aria-label="删除面"><svg><use href="#s-del"/></svg></button>
<button class="tb" aria-label="复制面"><svg><use href="#s-copy"/></svg></button><button class="dd" aria-label="更多"></button>
<button class="tb" aria-label="设为共面"><svg><use href="#s-patt"/></svg></button><button class="dd" aria-label="更多"></button>
<button class="tb" aria-label="线性尺寸"><svg><use href="#s-dim"/></svg></button><button class="dd" aria-label="更多"></button>
<button class="tb" aria-label="组合面"><svg><use href="#s-grp"/></svg></button>
<button class="tb" aria-label="壳体"><svg><use href="#s-off"/></svg></button>
<button class="tb" aria-label="移动边"><svg><use href="#s-edge"/></svg></button><button class="dd" aria-label="更多"></button>
<button class="opt" aria-label="工具条选项"></button>
</div>
<div class="bar grow"><i class="grip"></i>
<button class="tb" aria-label="直纹"><svg><use href="#f-rule"/></svg></button>
<button class="tb" aria-label="通过曲线网格"><svg><use href="#f-mesh"/></svg></button>
<button class="tb" aria-label="N 边曲面"><svg><use href="#f-n"/></svg></button>
<button class="tb" aria-label="扫掠"><svg><use href="#f-swept"/></svg></button>
<button class="tb" aria-label="曲线"><svg><use href="#f-crv"/></svg></button>
<button class="tb" aria-label="派生曲线"><svg><use href="#f-last"/></svg></button>
</div>
</div>

<div class="row">
<div class="bar"><span class="lead"></span>
<button class="tb" aria-label="图层类别"><svg><use href="#laydots"/></svg></button>
<button class="tb" aria-label="图层在视图中可见"><svg><use href="#layset"/></svg></button><i class="sep"></i>
<button class="tb" aria-label="属性"><svg><use href="#label"/></svg></button><i class="sep"></i>
<button class="tb" aria-label="检查体"><svg><use href="#chk1"/></svg></button>
<button class="tb" aria-label="检查草图"><svg><use href="#chk2"/></svg></button>
<button class="tb" aria-label="检查部件"><svg><use href="#chk3"/></svg></button><i class="sep"></i>
<button class="tb" aria-label="文本"><svg viewBox="0 0 24 24"><use href="#abc"/><text class="abc" x="3" y="21">ABC</text></svg></button>
<button class="opt" aria-label="工具条选项"></button>
</div>
<div class="bar"><i class="grip"></i>
<button class="tb" aria-label="偏置区域"><svg><use href="#sh1"/></svg></button>
<button class="tb" aria-label="曲面变形"><svg><use href="#sh2"/></svg></button>
<button class="tb" aria-label="选择层级"><svg><use href="#ptr"/></svg></button>
<button class="opt" aria-label="工具条选项"></button>
</div>
<div class="bar"><i class="grip"></i>
<button class="tb" aria-label="压缩弹簧"><svg><use href="#spr1"/></svg></button>
<button class="tb" aria-label="拉伸弹簧"><svg><use href="#spr2"/></svg></button>
<button class="tb" aria-label="碟形弹簧"><svg><use href="#disc"/></svg></button><i class="sep"></i>
<button class="tb" aria-label="删除弹簧"><svg><use href="#coil"/></svg></button>
<button class="opt" aria-label="工具条选项"></button>
</div>
<div class="bar apart"><i class="grip"></i>
<button class="tb" aria-label="三角"><svg><use href="#tri"/></svg></button>
<button class="tb" aria-label="表格"><svg><use href="#tbl"/></svg></button>
<button class="tb" aria-label="点集"><svg><use href="#fplus"/></svg></button>
<button class="tb" aria-label="圆集"><svg><use href="#fcirc"/></svg></button>
<button class="tb" aria-label="注释"><svg><use href="#note"/></svg></button>
<button class="tb" aria-label="格式刷"><svg><use href="#brush"/></svg></button><i class="sep"></i>
<button class="tb" aria-label="查找公差"><svg viewBox="0 0 24 24"><path d="M4 1l4-1 2 3h3l2-3 5 1 1 5-5 3-4-3h-2l-4 3-4-3z" fill="#8090a0" stroke="#38404c"/><circle cx="7" cy="6" r="2" fill="#303848"/><circle cx="16" cy="6" r="2" fill="#303848"/><text class="tol" x="0" y="23">10<tspan fill="#a82838">H7</tspan></text></svg></button>
<button class="opt" aria-label="工具条选项"></button>
</div>
<div class="bar"><i class="grip"></i>
<button class="tb" aria-label="锁定组件"><svg><use href="#lockc"/></svg></button>
<button class="tb" aria-label="解锁组件"><svg><use href="#lockc"/></svg></button>
<button class="opt" aria-label="工具条选项"></button>
</div>
</div>

<div class="row select-row">
<select class="filter" aria-label="选择过滤器"><option>择过滤器</option></select>
<select class="scope" aria-label="选择范围"><option>整个装配</option></select>
<button class="sb" aria-label="装配范围"><svg><use href="#q1"/></svg></button><i class="sep"></i>
<button class="sb" aria-label="重置过滤器"><svg><use href="#q2"/></svg></button>
<button class="sb" aria-label="点过滤器"><svg><use href="#q3"/></svg></button><button class="dd" aria-label="更多"></button>
<button class="sb" aria-label="返回选择"><svg><use href="#q4"/></svg></button>
<button class="sb" aria-label="返回链"><svg><use href="#q5"/></svg></button><i class="sep"></i>
<button class="sb" aria-label="矩形选择"><svg><use href="#q6"/></svg></button><button class="dd" aria-label="更多"></button><i class="sep"></i>
<button class="sb" aria-label="高亮边"><svg><use href="#q7"/></svg></button>
<button class="sb" aria-label="实体"><svg><use href="#q8"/></svg></button><i class="sep"></i>
<button class="sb on" aria-label="启用捕捉点"><svg><use href="#q9"/></svg></button>
<button class="sb on" aria-label="端点"><svg><use href="#q10"/></svg></button>
<button class="sb on" aria-label="中点"><svg><use href="#q11"/></svg></button>
<button class="sb" aria-label="控制点"><svg><use href="#q12"/></svg></button>
<button class="sb on" aria-label="极点"><svg><use href="#q13"/></svg></button>
<button class="sb" aria-label="交点"><svg><use href="#q14"/></svg></button>
<button class="sb on" aria-label="圆弧中心"><svg><use href="#q15"/></svg></button>
<button class="sb" aria-label="象限点"><svg><use href="#q16"/></svg></button>
<button class="sb on" aria-label="现有点"><svg><use href="#q17"/></svg></button>
<button class="sb on" aria-label="曲线上的点"><svg><use href="#q18"/></svg></button>
<button class="sb" aria-label="面上的点"><svg><use href="#q19"/></svg></button><i class="sep"></i>
<button class="sb" aria-label="栅格点"><svg><use href="#q20"/></svg></button>
</div>
</header>

<main class="work">
<aside class="nav">
<div class="nav-title"><h1>部件导航器</h1><button class="pin" aria-label="最大化"></button></div>
<section class="tree">
<div class="tree-head">名称<span class="up"></span></div>
<ul class="rows">
<li><svg class="twig"><use href="#g-top"/></svg><svg class="ic"><use href="#t-clock"/></svg><span>历史记录模式</span></li>
<li><button class="exp" aria-label="展开"><svg class="twig"><use href="#g-plus"/></svg></button><svg class="ic"><use href="#t-view"/></svg><span>模型视图</span></li>
<li><button class="exp" aria-label="展开"><svg class="twig"><use href="#g-plus"/></svg></button><svg class="ic tight"><use href="#t-tick"/></svg><svg class="ic"><use href="#t-cam"/></svg><span>摄像机</span></li>
<li><button class="exp" aria-label="折叠"><svg class="twig"><use href="#g-minus"/></svg></button><svg class="ic"><use href="#t-fold"/></svg><span>模型历史记录</span></li>
<li class="sub"><svg class="twig"><use href="#g-mid"/></svg><label><input type="checkbox" checked><svg class="ic"><use href="#t-csys"/></svg><span>基准坐标系 (0)</span></label></li>
<li class="sub"><svg class="twig"><use href="#g-mid"/></svg><label><input type="checkbox" checked><svg class="ic"><use href="#t-sk"/></svg><span>草图 (1) "SKETCH_0</span></label></li>
<li class="sub"><svg class="twig"><use href="#g-mid"/></svg><label><input type="checkbox" checked><svg class="ic"><use href="#t-sk"/></svg><span>草图 (2) "SKETCH_0</span></label></li>
<li class="sub"><svg class="twig"><use href="#g-mid"/></svg><label><input type="checkbox" checked><svg class="ic"><use href="#f-swept"/></svg><span>扫掠 (3)</span></label></li>
<li class="sub"><svg class="twig"><use href="#g-mid"/></svg><label><input type="checkbox" checked><svg class="ic"><use href="#extr"/></svg><span>拉伸 (4)</span></label></li>
<li class="sub"><button class="exp" aria-label="展开"><svg class="twig"><use href="#g-plus"/></svg></button><label><input type="checkbox" checked><svg class="ic"><use href="#patt"/></svg><span>阵列特征 [圆形] (5)</span></label></li>
<li class="sub"><svg class="twig"><use href="#g-mid"/></svg><label><input type="checkbox" checked><svg class="ic"><use href="#extr"/></svg><span>拉伸 (6)</span></label></li>
<li class="sub"><svg class="twig"><use href="#g-mid"/></svg><label><input type="checkbox" checked><svg class="ic"><use href="#unite"/></svg><span>求和 (7)</span></label></li>
<li class="sub"><svg class="twig"><use href="#g-mid"/></svg><label><input type="checkbox" checked><svg class="ic"><use href="#extr"/></svg><span>拉伸 (8)</span></label></li>
<li class="sub current"><svg class="twig"><use href="#g-end"/></svg><label><input type="checkbox" checked><svg class="ic"><use href="#extr"/></svg><span>拉伸 (9)</span></label></li>
</ul>
<div class="hscroll"><button aria-label="向左滚动"><svg viewBox="0 0 8 10"><path d="M6 1L2 5l4 4" fill="none" stroke="#444" stroke-width="1.600"/></svg></button><span class="track"><span class="thumb"></span></span><button aria-label="向右滚动"><svg viewBox="0 0 8 10"><path d="M2 1l4 4-4 4" fill="none" stroke="#444" stroke-width="1.600"/></svg></button></div>
</section>
<div class="splitter"></div>
<button class="fold">相依性<svg viewBox="0 0 12 10"><path d="M1 1h2.500L6 6l2.500-5H11L6 9.500z" fill="#2080b0"/></svg></button>
<button class="fold">细节<svg viewBox="0 0 12 10"><path d="M1 1h2.500L6 6l2.500-5H11L6 9.500z" fill="#2080b0"/></svg></button>
<button class="fold">预览<svg viewBox="0 0 12 10"><path d="M1 1h2.500L6 6l2.500-5H11L6 9.500z" fill="#2080b0"/></svg></button>
</aside>

<section class="view" aria-label="图形窗口">
<svg class="model" viewBox="193 138 1014 658" role="img" aria-label="手轮">
<defs>
<linearGradient id="tubeX"><stop offset="0" stop-color="#777"/><stop offset=".25" stop-color="#b4b4b4"/><stop offset=".45" stop-color="#f0f0f0"/><stop offset=".65" stop-color="#bbb"/><stop offset=".85" stop-color="#777"/><stop offset="1" stop-color="#505050"/></linearGradient>
<linearGradient id="tv" href="#tubeX" gradientUnits="userSpaceOnUse" x1="597" y1="371" x2="622" y2="378"/>
<linearGradient id="tb" href="#tubeX" gradientUnits="userSpaceOnUse" x1="553" y1="540" x2="578" y2="547"/>
<linearGradient id="tubeY"><stop offset="0" stop-color="#a8a8a8"/><stop offset=".2" stop-color="#d8d8d8"/><stop offset=".35" stop-color="#d0d0d0"/><stop offset=".6" stop-color="#999"/><stop offset=".85" stop-color="#555"/><stop offset="1" stop-color="#484848"/></linearGradient>
<linearGradient id="tl" href="#tubeY" gradientUnits="userSpaceOnUse" x1="496" y1="421" x2="489" y2="447"/>
<linearGradient id="tr" href="#tubeY" gradientUnits="userSpaceOnUse" x1="684" y1="479" x2="677" y2="506"/>
<linearGradient id="hub" gradientUnits="userSpaceOnUse" x1="539" y1="0" x2="632" y2="0"><stop offset="0" stop-color="#454545"/><stop offset=".13" stop-color="#858585"/><stop offset=".35" stop-color="#5c5c5c"/><stop offset="1" stop-color="#383838"/></linearGradient>
<linearGradient id="bore"><stop offset="0" stop-color="#555"/><stop offset=".5" stop-color="#777"/><stop offset="1" stop-color="#3c3c3c"/></linearGradient>
<clipPath id="boreClip"><ellipse cx="589.500" cy="455.500" rx="17.500" ry="15.500"/></clipPath>
<ellipse id="rim" cx="586" cy="463.500" rx="165.800" ry="143.700" transform="rotate(23.500 586 463.500)"/>
</defs>
<!-- rim: nested strokes shade the tube from its lower edge up -->
<g fill="none">
<use href="#rim" stroke="#565656" stroke-width="26"/>
<use href="#rim" y="-.7" stroke="#686868" stroke-width="24.600"/>
<use href="#rim" y="-1.400" stroke="#7a7a7a" stroke-width="23.200"/>
<use href="#rim" y="-2.100" stroke="#8c8c8c" stroke-width="21.600"/>
<use href="#rim" y="-2.800" stroke="#9c9c9c" stroke-width="19.600"/>
<use href="#rim" y="-3.300" stroke="#aaa" stroke-width="17.500"/>
<use href="#rim" y="-3.600" stroke="#b6b6b6" stroke-width="15"/>
<use href="#rim" y="-3.800" stroke="#c2c2c2" stroke-width="12"/>
<use href="#rim" y="-4" stroke="#cdcdcd" stroke-width="9"/>
<use href="#rim" y="-4" stroke="#dadada" stroke-width="5.500"/>
<use href="#rim" y="-4" stroke="#e6e6e6" stroke-width="2.500"/>
</g>
<path d="M586 417l22-85c5-5 12-7 17.500-13.500 5 8 7 15 6.800 22.500L611 426z" fill="url(#tv)"/>
<path d="M607.700 332c5-5 12-7 17.800-13.500 5 8 7 15 6.800 22.500" fill="none" stroke="#222"/>
<path d="M548 440l-104-34c-6 0-11 1-14 4 6 6 7 14 7.700 22.300L544 463z" fill="url(#tl)"/>
<path d="M444.300 406c-6 0-11 1-14.300 4 6 6 7 14 7.700 22.300" fill="none" stroke="#222"/>
<path d="M631 464l105 30.700c5 4 8 7 11.700 10.600-8 4-14 8-19.400 14.700L623 488.700z" fill="url(#tr)"/>
<path d="M736 494.700c5 4 8 7 11.700 10.600-8 4-14 8-19.400 14.700M741 504c7 1 13 4 16.700 10" fill="none" stroke="#222"/>
<ellipse cx="582.700" cy="471.500" rx="43.700" ry="38" transform="rotate(23 582.700 471.500)" fill="url(#hub)"/>
<path d="M546.700 447L539.700 463l85 24 8-23z" fill="url(#hub)"/>
<ellipse cx="589.700" cy="455.200" rx="43.700" ry="38" transform="rotate(23 589.700 455.200)" fill="#e8e8e8" stroke="#222"/>
<path d="M564 497c5-6 22-4 25 4l-23.300 92c-5 0-9 1-13.400 3.700-4-2-7-6-10.600-10.700z" fill="url(#tb)"/>
<path d="M541.700 586c4 4 7 8 10.600 10.700 4-2 8-3.700 13.400-3.700M564 497c5-6 22-4 25 4" fill="none" stroke="#333"/>
<path d="M581.500 468l-2.300 9 8 2 3-9z" fill="#e4e4e4" stroke="#222"/>
<g clip-path="url(#boreClip)"><rect x="570" y="438" width="40" height="36" fill="url(#bore)"/><ellipse cx="582" cy="471.500" rx="18" ry="15" fill="#dcdcdc" stroke="#444" stroke-width=".7"/></g>
<ellipse cx="589.500" cy="455.500" rx="17.500" ry="15.500" fill="none" stroke="#222"/>
<path d="M583 469l5 2" stroke="#e0e0e0" stroke-width="3"/>
<path d="M586 464l22-84M586 464l116 34" stroke="#dcdcdc"/>
<path d="M616 352l-7 11h7z" fill="#eee"/><ellipse cx="612.500" cy="364" rx="3" ry="1.500" fill="#777"/><path d="M699 494l14 7-14 1z" fill="#f4f4f4"/>
<text x="716" y="510" class="axis-w">X</text><text x="614" y="350" class="axis-w">Y</text>
<g fill="none" stroke="#1010f0" stroke-width="1.200"><path d="M586 464L609 410M600 433L613.700 377.300 604 402M600 433l11-34M613.300 410.700L665.300 426l-12 45M600 433.300l63 19.500-10.700 25 3-15M586 464l16 4"/><path d="M581 464h10M586 459v10"/></g>
<path d="M604 410l6-7 3 9z" fill="#0808a0"/><text x="609" y="405" class="axis-z">Z</text>
<path d="M614.300 597.500c5 8 5 18 1.700 26.500" fill="none" stroke="#4060f0" stroke-width="2"/>
</svg>
<svg class="triad" viewBox="0 0 60 64" role="img" aria-label="坐标轴">
<path d="M17 13l21 7-8 27-22-6z" fill="#c8c8ca" stroke="#999"/><path d="M14 22l20 7M12 31l20 6" stroke="#999"/>
<path d="M8 41L15 16" stroke="#30a030" stroke-width="2"/><path d="M16 9l3 10-6-1z" fill="#30a030"/>
<path d="M8 41l5-14" stroke="#0818a0" stroke-width="3"/><path d="M16 22l1 9-7-2z" fill="#0818a0"/>
<path d="M8 42l24 7" stroke="#d02020" stroke-width="2"/><path d="M44 53l-12-1 2-6z" fill="#d02020"/>
<circle cx="8" cy="42" r="4" fill="#b0b0b0"/><circle cx="7" cy="41" r="1.500" fill="#fff"/>
<text x="14" y="9" fill="#30a030">Y</text><text x="13" y="25" fill="#2848f0">Z</text><text x="45" y="57" fill="#d82020">X</text>
</svg>
</section>
</main>

<footer class="row foot">
<div class="bar"><button class="dd cut" aria-label="更多"></button>
<button class="tb" aria-label="装配"><svg><use href="#a1"/></svg></button>
<button class="tb" aria-label="装配窗口"><svg><use href="#a2"/></svg></button>
<button class="tb" aria-label="添加组件"><svg><use href="#a3"/></svg></button><button class="dd" aria-label="更多"></button>
<button class="tb" aria-label="移动组件"><svg><use href="#a4"/></svg></button>
<button class="tb" aria-label="镜像装配"><svg><use href="#a5"/></svg></button>
<button class="tb" aria-label="装配约束"><svg><use href="#a6"/></svg></button><i class="sep"></i>
<button class="tb" aria-label="编辑约束"><svg><use href="#a7"/></svg></button>
<button class="tb" aria-label="爆炸图"><svg><use href="#a8"/></svg></button>
<button class="tb" aria-label="装配序列"><svg><use href="#a9"/></svg></button><i class="sep"></i>
<button class="tb" aria-label="产品接口"><svg><use href="#a10"/></svg></button><i class="sep"></i>
<button class="tb" aria-label="WAVE 链接"><svg><use href="#a11"/></svg></button>
<button class="tb" aria-label="部件间链接"><svg><use href="#a12"/></svg></button>
<button class="tb" aria-label="关系浏览器"><svg><use href="#a13"/></svg></button>
<button class="opt more wide" aria-label="更多命令"></button>
</div>
<div class="bar grow"><i class="grip"></i>
<button class="tb" aria-label="新建草图"><svg><use href="#k1"/></svg></button>
<button class="tb finish" disabled><svg><use href="#k2"/></svg>完成草图</button>
<button class="tb" aria-label="轮廓"><svg><use href="#k3"/></svg></button>
<button class="tb" aria-label="直线"><svg><use href="#k4"/></svg></button>
<button class="tb" aria-label="圆弧"><svg><use href="#k5"/></svg></button>
<button class="tb" aria-label="圆"><svg><use href="#k6"/></svg></button>
<button class="tb" aria-label="圆角"><svg><use href="#k7"/></svg></button>
<button class="tb" aria-label="倒角"><svg><use href="#k8"/></svg></button>
<button class="tb" aria-label="矩形"><svg><use href="#k9"/></svg></button>
<button class="tb" aria-label="艺术样条"><svg><use href="#k10"/></svg></button>
<button class="tb" aria-label="点"><svg><use href="#k11"/></svg></button>
<button class="tb" aria-label="偏置曲线"><svg><use href="#k12"/></svg></button><button class="dd" aria-label="更多"></button><i class="sep"></i>
<button class="tb" aria-label="快速修剪"><svg><use href="#k13"/></svg></button>
<button class="tb" aria-label="快速延伸"><svg><use href="#k14"/></svg></button>
<button class="tb" aria-label="制作拐角"><svg><use href="#k15"/></svg></button><i class="sep"></i>
<button class="tb" aria-label="快速尺寸"><svg><use href="#k16"/></svg></button><button class="dd" aria-label="更多"></button><i class="sep"></i>
<button class="tb" aria-label="几何约束"><svg><use href="#k17"/></svg></button>
<button class="tb" aria-label="设为对称"><svg><use href="#k18"/></svg></button>
<button class="tb" aria-label="显示约束"><svg><use href="#k19"/></svg></button><button class="dd" aria-label="更多"></button><i class="sep"></i>
<button class="tb" aria-label="编辑草图"><svg><use href="#k20"/></svg></button>
</div>
</footer>
</body>
</html>
```
FILE: styles.css
```css
* { box-sizing: border-box; }
html, body { height: 100%; }
body {
  margin: 0;
  display: flex;
  flex-direction: column;
  overflow: hidden;
  background: #fff;
  color: #1a1a1a;
  font: 12px/20px "Noto Sans", "Noto Sans CJK SC", sans-serif;
}
.defs { position: absolute; width: 0; height: 0; }
button {
  flex: none;
  margin: 0;
  padding: 0;
  border: 0;
  background: none;
  color: inherit;
  font: inherit;
  white-space: nowrap;
}

/* toolbars */
.bars { flex: none; border-bottom: 1px solid #858c90; }
.caption { height: 4px; background: #c8d7d4; }
.caption-tab { display: block; width: 30px; height: 1px; background: #ffd76a; }
.row { display: flex; height: 34px; overflow: hidden; }
.bar {
  flex: none;
  display: flex;
  align-items: center;
  border-right: 1px solid #dcdcdc;
  border-bottom: 1px solid #dcdcdc;
}
.bar.spaced { margin-left: 9px; }
.bar.apart { margin-left: 94px; }
.bar.grow { flex: 1; border-right: 0; min-width: 0; }
.tb { width: 31px; height: 30px; display: flex; align-items: center; justify-content: center; }
.tb svg { flex: none; width: 24px; height: 24px; overflow: visible; }
.abc { font: bold 6px "Liberation Sans", sans-serif; fill: #222; }
.tol { font: 600 11px "Open Sans", sans-serif; fill: #222; }
.start { width: 24px; margin-left: -5px; }
.dd { width: 12px; height: 30px; display: flex; align-items: center; justify-content: center; }
.dd::after, .opt::after, .up {
  content: "";
  border: 3px solid transparent;
  border-top-color: #111;
  border-bottom: 0;
}
.dd.cut { width: 6px; justify-content: flex-start; }
.lead { width: 0; margin-left: -4px; }
.sep { flex: none; width: 6px; height: 26px; border-left: 1px solid #d6d6d6; margin: 0 -1px 0 1px; }
.grip {
  flex: none;
  width: 3px;
  height: 26px;
  margin: 0 2px 0 3px;
  background: repeating-linear-gradient(#aaa 0 2px, transparent 2px 4px);
}
.opt { width: 13px; height: 32px; display: flex; flex-direction: column; align-items: center; justify-content: flex-end; padding-bottom: 8px; }
.opt.more { justify-content: space-between; }
.opt.more::before { content: "»"; height: 14px; font: bold 15px/12px "Open Sans", sans-serif; color: #222; }
.opt.wide { width: 18px; margin-left: 26px; }
.search {
  display: flex;
  align-items: center;
  width: 126px;
  height: 20px;
  margin: 0 4px;
  border: 1px solid #a4a4a4;
}
.search input { flex: 1; min-width: 0; padding: 0 1px; border: 0; outline: 0; background: none; font: inherit; color: #000; }
.search svg { flex: none; width: 16px; height: 16px; }

/* selection bar */
.select-row { height: 31px; align-items: center; }
select {
  flex: none;
  height: 20px;
  padding: 0 4px 0 2px;
  border: 1px solid #a0a0a0;
  border-radius: 0;
  appearance: none;
  color: #000;
  font: 12px/18px "Noto Sans", "Noto Sans CJK SC", sans-serif;
  background: conic-gradient(from -45deg at 50% 100%, #111 90deg, transparent 0) right 4px center / 8px 4px no-repeat #fff;
}
.filter { width: 102px; margin-left: -7px; }
.scope { width: 140px; margin: 0 5px 0 6px; }
.sb { width: 22px; height: 22px; display: flex; align-items: center; justify-content: center; }
.sb svg { width: 18px; height: 18px; }
.sb.on, .sb.on ~ .sb { width: 23px; }
.sb.on { background: #c8d7d4; border: 1px solid #a8bdb8; }

/* navigator */
.work { flex: 1; min-height: 0; display: flex; }
.nav { flex: none; width: 193px; display: flex; flex-direction: column; padding: 0 9px 7px 0; border-right: 1px solid #7c8b94; }
.nav-title { flex: none; height: 28px; display: flex; align-items: center; justify-content: space-between; padding: 2px 7px 0 0; }
.nav-title h1 { margin: 0; font-size: 12px; font-weight: 400; }
.pin { width: 12px; height: 11px; border: 1px solid #111; border-top-width: 2px; }
.tree { flex: 1; min-height: 0; display: flex; flex-direction: column; border-top: 1px solid #ddd; border-right: 1px solid #ddd; }
.tree-head { flex: none; height: 22px; padding: 2px 0 0 3px; background: #f0f0f0; border-bottom: 1px solid #d4d4d4; display: flex; align-items: center; }
.up { margin-left: 18px; border: 5px solid transparent; border-top: 0; border-bottom-color: #222; }
.rows {
  flex: 1;
  min-height: 0;
  margin: 0;
  padding: 0;
  list-style: none;
  overflow: hidden;
  background: repeating-linear-gradient(#fff 0 19px, #e8e8e8 19px 20px, #f9f9f9 20px 39px, #e8e8e8 39px 40px);
}
.rows li { height: 20px; display: flex; align-items: center; white-space: nowrap; overflow: hidden; }
.rows label { display: flex; align-items: center; }
.sub { padding-left: 20px; }
.exp { height: 20px; }
.twig { flex: none; display: block; width: 16px; height: 20px; }
.ic { flex: none; width: 16px; height: 16px; margin-right: 2px; }
.ic.tight { margin-right: 0; }
.current { font-weight: 700; }
.rows input {
  flex: none;
  width: 13px;
  height: 13px;
  margin: 0 2px 0 1px;
  border: 1px solid #000;
  appearance: none;
  background: #fff;
  position: relative;
}
.rows input:checked::after {
  content: "";
  position: absolute;
  inset: 1px;
  background: #10c030;
  clip-path: polygon(0 42%, 22% 32%, 38% 50%, 82% 2%, 100% 18%, 40% 100%);
}
.hscroll { flex: none; display: flex; height: 16px; background: #f0f0f0; }
.hscroll button { width: 14px; display: flex; align-items: center; justify-content: center; }
.hscroll svg { width: 8px; height: 10px; }
.track { flex: 1; }
.thumb { display: block; width: 36%; height: 16px; background: #cbcbcb; }
.splitter { flex: none; height: 5px; margin-top: 2px; background: #d0d0d0; border: 1px solid #aaa; border-width: 1px 0; }
.fold {
  height: 24px;
  padding: 4px 5px 0 2px;
  display: flex;
  align-items: center;
  justify-content: space-between;
  border-bottom: 2px solid #cdcdcd;
  color: #2880b0;
  font-size: 14px;
  line-height: 20px;
}
.fold svg { width: 12px; height: 10px; margin-bottom: 4px; }

/* graphics window */
.view { flex: 1; min-width: 0; position: relative; background: linear-gradient(#b4b5b7, #d1d2d4 45%, #e2e3e5 75%, #e8e9eb); }
.model { display: block; width: 100%; height: 100%; }
.triad { position: absolute; left: 46px; bottom: 34px; width: 60px; height: 64px; font: 11px "Liberation Sans", sans-serif; }
.axis-w { font: 10px "Liberation Sans", sans-serif; fill: #ddd; }
.axis-z { font: 12px "Liberation Sans", sans-serif; fill: #1010f0; }

/* bottom bar */
.foot { flex: none; height: 31px; padding-top: 1px; }
.foot .bar { border-bottom: 0; height: 31px; }
.foot .dd.cut { width: 7px; }
.foot .opt.wide { margin-left: 18px; }
.finish { width: auto; padding: 0 3px; gap: 3px; color: #b8b8b8; font-size: 11px; }
```
